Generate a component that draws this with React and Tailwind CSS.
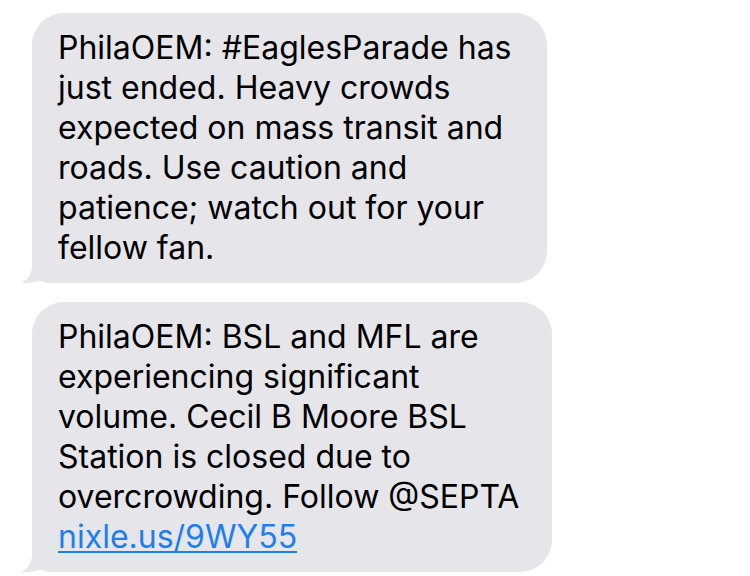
import React from "react";

const messages = [
  {
    id: 1,
    width: "w-[515px]",
    lines: [
      "PhilaOEM: #EaglesParade has",
      "just ended. Heavy crowds",
      "expected on mass transit and",
      "roads. Use caution and",
      "patience; watch out for your",
      "fellow fan.",
    ],
  },
  {
    id: 2,
    width: "w-[520px]",
    lines: [
      "PhilaOEM: BSL and MFL are",
      "experiencing significant",
      "volume. Cecil B Moore BSL",
      "Station is closed due to",
      "overcrowding. Follow @SEPTA",
    ],
    link: "nixle.us/9WY55",
  },
];

function Tail() {
  return (
    <svg
      className="absolute left-[-12px] bottom-0"
      width="30"
      height="30"
      viewBox="0 0 30 30"
    >
      <path
        d="M12 0 L12 12 C12 21 8 27 1 30 C8 30.8 15 29 21 27.6 L21 0 Z"
        fill="#e5e5ea"
      />
    </svg>
  );
}

function Bubble({ msg }) {
  return (
    <div
      className={`relative ${msg.width} bg-[#e5e5ea] rounded-[32px] rounded-bl-[18px] pl-[26px] py-[15px]`}
    >
      <Tail />
      <div className="relative text-[32px] leading-[40px] text-black">
        {msg.lines.map((line, i) => (
          <div key={i} className="whitespace-nowrap">
            {line}
          </div>
        ))}
        {msg.link && (
          <div className="whitespace-nowrap">
            <a
              href="#"
              className="text-[#1b7ff0] underline decoration-2 underline-offset-[3px]"
            >
              {msg.link}
            </a>
          </div>
        )}
      </div>
    </div>
  );
}

export default function App() {
  return (
    <div
      className="w-[750px] h-[576px] bg-white overflow-hidden pt-[13px] pl-[32px]"
      style={{ fontFamily: "Inter, 'Noto Sans', sans-serif" }}
    >
      <div className="flex flex-col gap-[19px]">
        {messages.map((m) => (
          <Bubble key={m.id} msg={m} />
        ))}
      </div>
    </div>
  );
}
